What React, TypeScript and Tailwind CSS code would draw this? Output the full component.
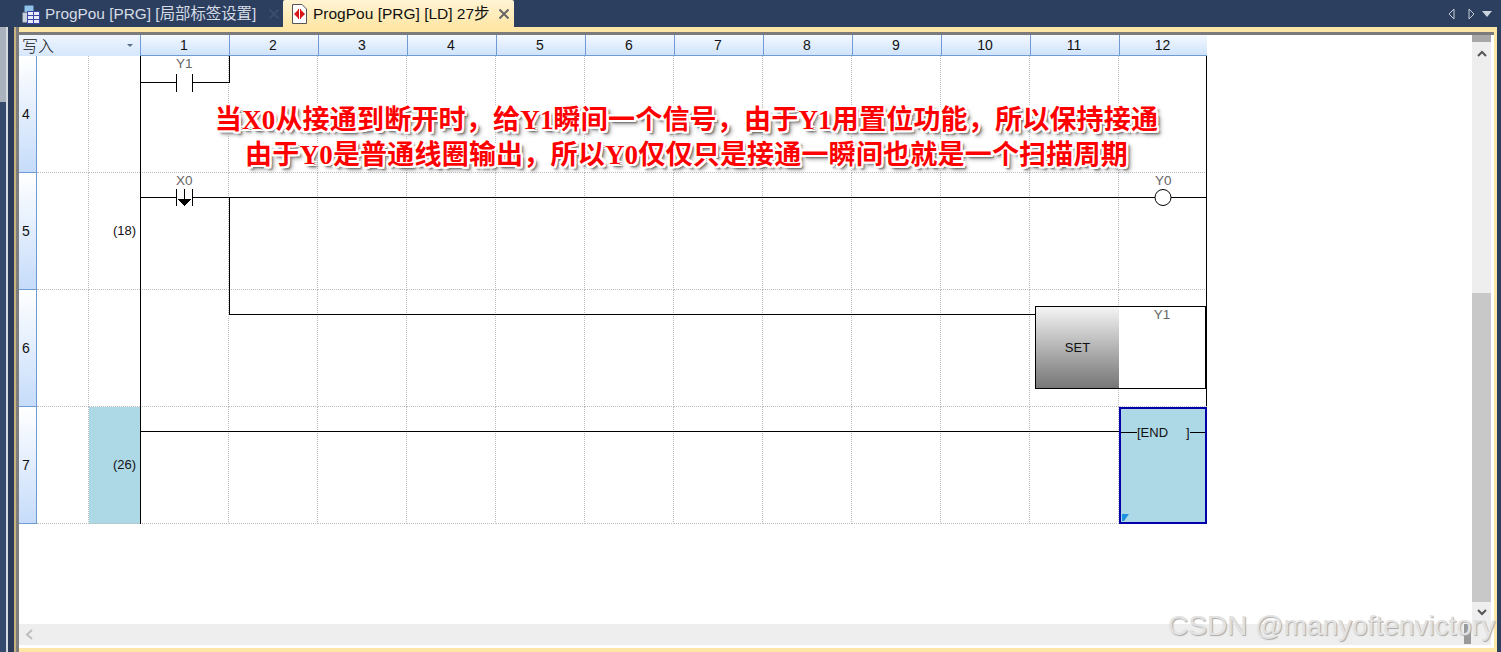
const cols = ["1", "2", "3", "4", "5", "6", "7", "8", "9", "10", "11", "12"];

const rows = [
  { id: "4", step: "", end: false },
  { id: "5", step: "(18)", end: false },
  { id: "6", step: "", end: false },
  { id: "7", step: "(26)", end: true },
];

const outline =
  "[text-shadow:2px_0_0_#fff,-2px_0_0_#fff,0_2px_0_#fff,0_-2px_0_#fff,2px_2px_0_#fff,-2px_-2px_0_#fff,2px_-2px_0_#fff,-2px_2px_0_#fff,3px_3px_2px_#666,4px_4px_4px_#999]";

const Ladder = () => (
  <svg
    className="absolute left-0 top-0 pointer-events-none"
    width="1068"
    height="468"
    viewBox="0 0 1068 468"
    shapeRendering="crispEdges"
  >
    {/* left power rail */}
    <path d="M0.5 0V468" stroke="#000" fill="none" />
    {/* Y1 self holding contact */}
    <path d="M0 26.5H36M52 26.5H89.5V0M36.5 18V36M52.5 18V36" stroke="#000" fill="none" />
    {/* X0 falling edge contact */}
    <path d="M0 141.5H36M52 141.5H1066.5M36.5 133V150M52.5 133V150M44.5 133V148" stroke="#000" fill="none" />
    <path d="M37 143H52L44.5 150Z" fill="#000" />
    {/* branch to SET */}
    <path d="M89.5 141V258.5H896" stroke="#000" fill="none" />
    <circle cx="1023" cy="141.5" r="8" fill="#fff" stroke="#000" shapeRendering="auto" />
    {/* right rail */}
    <path d="M1066.5 0V350" stroke="#000" fill="none" />
    {/* END row */}
    <path d="M0 375.5H984" stroke="#000" fill="none" />
  </svg>
);

const App = () => {
  return (
    <div className="relative w-[1501px] h-[652px] overflow-hidden flex bg-[#2d3f5f] font-['Liberation_Sans',sans-serif]">
      {/* left edge of the IDE */}
      <div className="w-[19px] h-full flex flex-col shrink-0">
        <div className="h-[27px] bg-[#2d3f5f]" />
        <div className="flex-1 flex">
          <div className="w-[6px] flex flex-col">
            <div className="h-[75px] bg-[#aab2be]" />
            <div className="flex-1 bg-[#34496b]" />
          </div>
          <div className="w-[2px] bg-[#d5d9e0]" />
          <div className="w-[6px] bg-[#2c3b57]" />
          <div className="w-[2px] bg-[#c9b27f]" />
          <div className="w-[3px] bg-[#7d7d7d]" />
        </div>
      </div>

      <div className="flex-1 min-w-0 flex flex-col">
        {/* tabs */}
        <div className="h-[27px] flex items-end shrink-0 relative">
          <div className="w-[264px] h-[27px] flex items-center gap-[5px] pl-[2px] text-[15.4px] text-[#d6dce6] relative">
            <svg width="19" height="20" viewBox="0 0 19 20" className="shrink-0">
              <rect x="3.5" y="1.5" width="9" height="9" rx="1" fill="#8fc4e8" stroke="#5b7fa6" />
              <rect x="1.5" y="8.5" width="5" height="10" rx="1" fill="#c8d2dc" stroke="#6f7f90" />
              <rect x="6.5" y="7.5" width="12" height="12" fill="#e9ecf8" stroke="#3a46a8" />
              <path d="M6 11.5H19M6 15.5H19M12.5 7V19" stroke="#3a46a8" />
            </svg>
            <span className="whitespace-nowrap font-['Liberation_Sans','Noto_Sans_CJK_SC',sans-serif]">ProgPou [PRG] [局部标签设置]</span>
            <svg width="12" height="12" viewBox="0 0 12 12" className="absolute right-[3px] top-[8px]">
              <path d="M1.5 1.5L10.5 10.5M10.5 1.5L1.5 10.5" stroke="#3b4d6e" strokeWidth="2" />
            </svg>
          </div>
          <div className="w-[231px] h-[27px] bg-gradient-to-b from-[#fff4d4] to-[#fee6a6] rounded-t-[2px] flex items-center gap-[6px] pl-[9px] text-[15.5px] text-[#111] relative">
            <svg width="15" height="20" viewBox="0 0 15 20" className="shrink-0">
              <path d="M0.5 0.5H10L14.5 5V19.5H0.5Z" fill="#fff" stroke="#555" />
              <path d="M2 10L6 6V14ZM13 10L9 6V14Z" fill="#d81818" />
              <path d="M6.5 5V15M8.5 5V15" stroke="#d81818" />
            </svg>
            <span className="whitespace-nowrap font-['Liberation_Sans','Noto_Sans_CJK_SC',sans-serif]">ProgPou [PRG] [LD] 27步</span>
            <svg width="12" height="12" viewBox="0 0 12 12" className="absolute right-[4px] top-[8px]">
              <path d="M1.5 1.5L10.5 10.5M10.5 1.5L1.5 10.5" stroke="#666" strokeWidth="2" />
            </svg>
          </div>
          <div className="flex-1" />
          <div className="flex items-center h-[27px] pr-[5px] gap-[13px]">
            <svg width="7" height="12" viewBox="0 0 7 12">
              <path d="M6 1L1 6L6 11Z" fill="#2d3f5f" stroke="#c4ccd8" />
            </svg>
            <div className="flex items-center gap-[7px]">
              <svg width="7" height="12" viewBox="0 0 7 12">
                <path d="M1 1L6 6L1 11Z" fill="#2d3f5f" stroke="#c4ccd8" />
              </svg>
              <svg width="10" height="6" viewBox="0 0 10 6">
                <path d="M0 0H10L5 6Z" fill="#ced5e0" />
              </svg>
            </div>
          </div>
        </div>

        {/* editor frame */}
        <div className="flex-1 min-h-0 flex flex-col border-t-[5px] border-b-[4px] border-r-[3px] border-[#fee6a6]">
          <div className="flex-1 min-h-0 flex flex-col border-t-[3px] border-[#7b7b7b] bg-white pr-[3px]">
            <div className="flex-1 min-h-0 flex">
              {/* ladder sheet */}
              <div className="flex-1 min-w-0 relative">
                <div className="grid grid-cols-[18px_52px_51px_repeat(11,89px)_88px] grid-rows-[21px_repeat(4,117px)] w-[1188px]">
                  <div className="col-span-2 bg-gradient-to-b from-[#eef5ff] to-[#d6e7fc] text-[16px] leading-[20px] pl-[3px] text-[#111] font-['Noto_Sans_CJK_SC',sans-serif] font-light">写入</div>
                  <div className="bg-gradient-to-b from-[#eef5ff] to-[#d6e7fc] relative">
                    <span className="absolute right-[7px] top-[9px] border-x-[3px] border-t-[3px] border-x-transparent border-t-[#5b6f8c]" />
                  </div>
                  {cols.map((c) => (
                    <div
                      key={c}
                      className="bg-gradient-to-b from-[#f4f9ff] to-[#cfe3fb] border-l border-b border-[#6e9bd6] text-center pr-[2px] text-[14px] leading-[20px] text-[#111]"
                    >
                      {c}
                    </div>
                  ))}

                  {rows.map((r) => (
                    <div key={r.id} className="contents">
                      <div className="bg-gradient-to-b from-white to-[#c6dcfa] border-r border-b border-[#6e9bd6] flex items-center pl-[3px] text-[14px] text-[#111]">
                        {r.id}
                      </div>
                      <div className="border-r border-b border-dotted border-[#bdbdbd]" />
                      <div
                        className={`border-b border-dotted border-[#bdbdbd] flex items-center justify-end pr-[4px] text-[13px] text-[#111] ${r.end ? "bg-[#add8e6]" : ""}`}
                      >
                        {r.step}
                      </div>
                      {cols.map((c) => (
                        <div key={c} className="border-r border-b border-dotted border-[#bdbdbd]" />
                      ))}
                    </div>
                  ))}
                </div>

                {/* rungs and instructions lie over the grid */}
                <div className="absolute left-[121px] top-[21px] w-[1068px] h-[468px]">
                  <Ladder />
                  <span className="absolute left-[36px] top-[0px] text-[13.5px] leading-[15px] text-[#666]">Y1</span>
                  <span className="absolute left-[36px] top-[117px] text-[13.5px] leading-[15px] text-[#666]">X0</span>
                  <span className="absolute left-[1015px] top-[117px] text-[13.5px] leading-[15px] text-[#666]">Y0</span>
                  <div className="absolute left-[895px] top-[250px] w-[171px] h-[83px] border border-black flex bg-white">
                    <div className="w-[83px] bg-gradient-to-b from-[#f5f5f5] to-[#777] flex items-center justify-center text-[13px] text-[#111]">
                      SET
                    </div>
                    <div className="flex-1 text-center text-[13.5px] leading-[16px] text-[#666]">Y1</div>
                  </div>
                  <div className="absolute left-[979px] top-[351px] w-[88px] h-[117px] border-2 border-[#0000a8] bg-[#add8e6]">
                    <span className="absolute left-[16px] top-[16px] text-[13px] leading-[15px] text-[#111]">[END</span>
                    <span className="absolute left-[65px] top-[16px] text-[13px] leading-[15px] text-[#111]">]</span>
                    <svg width="84" height="113" viewBox="0 0 84 113" className="absolute left-0 top-0">
                      <path d="M0 23.5H16M69 23.5H84" stroke="#000" shapeRendering="crispEdges" />
                      <path d="M1 105H8L3 112H1Z" fill="#1e90e0" />
                    </svg>
                  </div>
                </div>

                {/* annotation over the ladder */}
                <div className="absolute left-[0px] top-[68px] w-[1335px] text-center text-[27px] leading-[35px] tracking-[0.2px] font-bold text-[#ff0000] font-['Liberation_Serif','Noto_Sans_CJK_SC',serif]">
                  <div className={`whitespace-nowrap ${outline}`}>当X0从接通到断开时，给Y1瞬间一个信号，由于Y1用置位功能，所以保持接通</div>
                  <div className={`whitespace-nowrap ${outline}`}>由于Y0是普通线圈输出，所以Y0仅仅只是接通一瞬间也就是一个扫描周期</div>
                </div>
              </div>

              {/* vertical scrollbar */}
              <div className="w-[19px] shrink-0 bg-[#eeeeee] flex flex-col items-center">
                <div className="w-full h-[7px] bg-[#a8a8a8]" />
                <svg width="10" height="7" viewBox="0 0 10 7" className="mt-[8px]">
                  <path d="M1 6L5 2L9 6" stroke="#555" strokeWidth="2" fill="none" />
                </svg>
                <div className="w-full mt-[236px] h-[309px] bg-[#c8c8c8]" />
                <svg width="10" height="7" viewBox="0 0 10 7" className="mt-[7px]">
                  <path d="M1 1L5 5L9 1" stroke="#555" strokeWidth="2" fill="none" />
                </svg>
              </div>
            </div>

            {/* horizontal scrollbar */}
            <div className="h-[21px] mb-[3px] shrink-0 bg-[#eeeeee] flex items-center pl-[6px] pr-[20px]">
              <svg width="9" height="11" viewBox="0 0 9 11">
                <path d="M7 1L2 5.5L7 10" stroke="#bdbdbd" strokeWidth="2" fill="none" />
              </svg>
              <div className="flex-1" />
              <div className="w-[7px] h-[20px] self-start bg-[#9a9a9a]" />
            </div>
          </div>
        </div>
      </div>

      {/* right edge of the window */}
      <div className="w-[4px] shrink-0 bg-[#2d3f5f]" />

      {/* watermark */}
      <div className="absolute left-[1168px] top-[607px] text-[28px] leading-[38px] whitespace-nowrap text-[#e2e2e2] [text-shadow:1px_1px_1px_#a8a8a8]">
        CSDN @manyoftenvictory
      </div>
    </div>
  );
};

export default App;
